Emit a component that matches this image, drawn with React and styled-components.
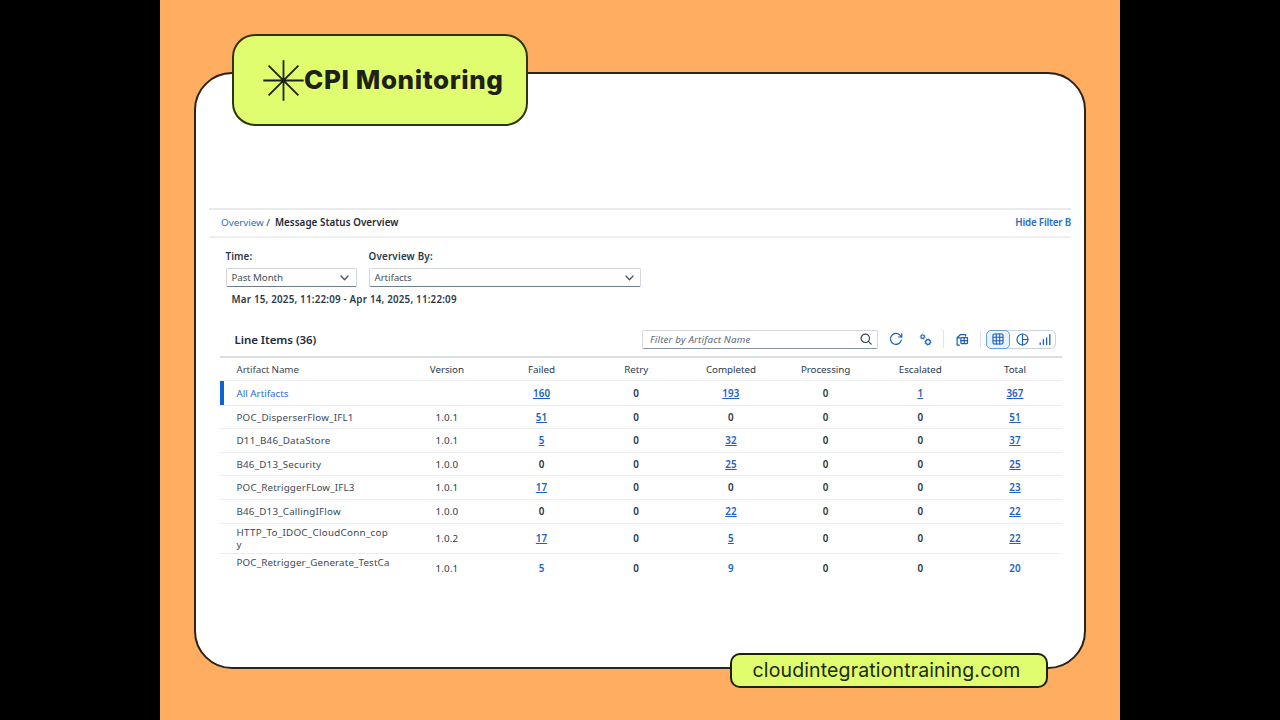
import styled, { createGlobalStyle } from 'styled-components';

const GlobalStyle = createGlobalStyle`
    * {
        box-sizing: border-box;
    }
    body {
        margin: 0;
        background: #000;
        overflow: hidden;
    }
`;

const Stage = styled.div`
    width: 1280px;
    height: 720px;
    display: flex;
    justify-content: center;
    background: #000;
`;

const Slide = styled.div`
    position: relative;
    width: 960px;
    height: 720px;
    padding: 72px 34px 51px;
    background: #ffad61;
`;

const Card = styled.div`
    height: 597px;
    padding: 134px 13px 0;
    border: 2px solid #2b241c;
    border-radius: 38px;
    background: #fff;
    font-family: 'Noto Sans', sans-serif;
    font-size: 9.8px;
    color: #2b3a4b;
`;

const Badge = styled.div`
    position: absolute;
    top: 34px;
    left: 72px;
    width: 295.5px;
    height: 92px;
    padding: 0 0 1px 29px;
    display: flex;
    align-items: center;
    border: 2px solid #2f3416;
    border-radius: 23px;
    background: #dffd6e;
    color: #1d2117;
    font: 800 26px Inter, sans-serif;
    letter-spacing: 0.6px;
    white-space: nowrap;
    & svg {
        margin-top: 1px;
    }
`;

const SiteTag = styled.div`
    position: absolute;
    top: 653px;
    left: 569.5px;
    width: 318px;
    height: 35px;
    padding: 0 0 1px 21px;
    display: flex;
    align-items: center;
    border: 2px solid #1d2109;
    border-radius: 10px;
    background: #dffd6e;
    color: #1d2a0d;
    font: 19.5px Inter, sans-serif;
    letter-spacing: 0.14px;
    white-space: nowrap;
`;

const Text = styled.span`
    font-size: ${(p) => p.$size || 9.8}px;
    font-weight: ${(p) => (p.$bold ? 600 : 400)};
    letter-spacing: ${(p) => p.$track || 0}px;
    color: ${(p) => p.$color || 'inherit'};
    white-space: nowrap;
`;

const Crumbs = styled.div`
    height: 30px;
    padding: 0 0 1px 12px;
    display: flex;
    align-items: center;
    border-top: 2px solid #e9eaeb;
    border-bottom: 2px solid #eeeff0;
    & .slash {
        margin: 0 5px 0 2.5px;
    }
    & .action {
        margin-left: auto;
    }
`;

const Filters = styled.div`
    display: flex;
    gap: 12px;
    padding: 12px 0 0 16.5px;
`;

const Field = styled.label`
    width: ${(p) => p.$width}px;
    display: flex;
    flex-direction: column;
    line-height: 14px;
`;

const Select = styled.div`
    height: 19px;
    margin-top: 4px;
    padding: 0 6.5px 0 5px;
    display: flex;
    align-items: center;
    justify-content: space-between;
    border: 1px solid #d4d8dc;
    border-bottom: 1px solid #6d7d8e;
    border-radius: 2px;
    color: #45505c;
`;

const Period = styled.div`
    height: 14px;
    margin-top: 6px;
    padding-left: 22.5px;
    line-height: 14px;
`;

const Toolbar = styled.div`
    height: 22px;
    margin-top: 21px;
    padding: 0 15px 0 25.5px;
    display: flex;
    align-items: center;
`;

const Search = styled.div`
    width: 236px;
    height: 19px;
    margin-left: auto;
    padding: 0 5px 0 7px;
    display: flex;
    align-items: center;
    justify-content: space-between;
    border: 1px solid #d4d8dc;
    border-bottom: 1px solid #8494a5;
    border-radius: 2px;
    font-style: italic;
    color: #5b6876;
`;

const Actions = styled.div`
    display: flex;
    align-items: center;
    margin-left: 11px;
    color: #1a5fb8;
    & > svg + svg {
        margin-left: 16px;
    }
`;

const Divider = styled.i`
    width: 1px;
    height: 18px;
    margin: ${(p) => p.$margin};
    background: #e2e5e8;
`;

const Segments = styled.div`
    width: 70px;
    height: 19px;
    display: flex;
    align-items: center;
    border: 1px solid #ccd3da;
    border-radius: 5px;
`;

const Segment = styled.div`
    width: ${(p) => p.$width}px;
    height: 19px;
    flex: none;
    display: flex;
    align-items: center;
    justify-content: center;
    ${(p) =>
        p.$active &&
        `
        margin-left: -1px;
        border: 1px solid #6a9fd8;
        border-radius: 5px;
        background: #e9f3fd;
    `}
`;

const Table = styled.div`
    width: 842px;
    margin: 6px 0 0 11px;
    border-top: 2px solid #dcdee0;
`;

const Row = styled.div`
    height: ${(p) => p.$height}px;
    padding-top: 2px;
    display: grid;
    grid-template-columns: 179.5px repeat(7, 94.7px);
    align-items: center;
    border-bottom: 1px solid ${(p) => (p.$last ? 'transparent' : '#eaecee')};
    box-shadow: ${(p) => (p.$selected ? 'inset 4px 0 #0f62d6' : 'none')};
`;

const Name = styled.div`
    padding-left: 16.5px;
    line-height: 12.5px;
    display: flex;
    flex-direction: column;
    color: ${(p) => p.$color || '#3d4956'};
`;

const Cell = styled.div`
    display: flex;
    justify-content: center;
    line-height: 12.5px;
`;

const Count = styled.span`
    font-weight: 600;
    letter-spacing: 0.1px;
    color: ${(p) => (p.$link ? '#1b62c4' : '#27333f')};
    text-decoration: ${(p) => (p.$underline ? 'underline' : 'none')};
    text-underline-offset: 1px;
`;

const Svg = ({ w, h = w, children, ...rest }) => (
    <svg
        width={w}
        height={h}
        viewBox={`0 0 ${w} ${h}`}
        fill='none'
        stroke='currentColor'
        strokeWidth='1.2'
        strokeLinecap='round'
        strokeLinejoin='round'
        {...rest}
    >
        {children}
    </svg>
);

const Star = () => (
    <Svg w={41} strokeWidth='1.8' strokeLinecap='butt'>
        <path d='M20.5 0.3v40.4M0.3 20.5h40.4M5.6 5.6l29.8 29.8M35.4 5.6L5.6 35.4' />
    </Svg>
);

const Chevron = () => (
    <Svg w={9} h={6} strokeWidth='1.3' stroke='#4a5561'>
        <path d='M1 1l3.5 3.7L8 1' />
    </Svg>
);

const SearchIcon = () => (
    <Svg w={12} stroke='#36424e'>
        <circle cx='5.3' cy='5.3' r='4.2' />
        <path d='M8.4 8.4l2.8 2.8' />
    </Svg>
);

const RefreshIcon = () => (
    <Svg w={14}>
        <path d='M12.3 8.2A5.5 5.5 0 1 1 11.4 3.6L12.6 5M12.8 1.6V5H9.4' />
    </Svg>
);

const GearsIcon = () => (
    <Svg w={13}>
        <circle cx='3.7' cy='3.7' r='1.7' />
        <circle cx='3.7' cy='3.7' r='2.6' strokeWidth='0.8' strokeDasharray='0.9 1.82' strokeLinecap='butt' />
        <circle cx='9' cy='9' r='2.3' />
        <circle cx='9' cy='9' r='3.2' strokeWidth='0.8' strokeDasharray='1 1.51' strokeLinecap='butt' />
    </Svg>
);

const ExportIcon = () => (
    <Svg w={13}>
        <path d='M3.4 12.1H1.1V4.8L4.3 1.7H9.6V3M1.3 4.9H4' />
        <rect x='4.9' y='4.6' width='6.6' height='6' rx='0.5' />
        <path d='M4.9 7.6h6.6M8.2 4.7v5.8' />
    </Svg>
);

const GridIcon = () => (
    <Svg w={12} strokeWidth='1.1'>
        <rect x='1' y='1' width='10' height='10' rx='1.2' />
        <path d='M1 4.3h10M1 7.7h10M4.3 1v10M7.7 1v10' />
    </Svg>
);

const PieIcon = () => (
    <Svg w={13}>
        <circle cx='6.5' cy='6.5' r='5.5' />
        <path d='M6.5 1v11M6.5 6.5H12' />
    </Svg>
);

const BarsIcon = () => (
    <Svg w={12} h={13} strokeWidth='1.3'>
        <path d='M1.2 10v1.6M4.4 6.6v5M7.6 5v6.6M10.8 1.6v10' />
    </Svg>
);

const columns = ['Version', 'Failed', 'Retry', 'Completed', 'Processing', 'Escalated', 'Total'];

const rows = [
    { name: ['All Artifacts'], track: 0, version: '', counts: [160, 0, 193, 0, 1, 367], height: 24.2 },
    { name: ['POC_DisperserFlow_IFL1'], track: 0.19, version: '1.0.1', counts: [51, 0, 0, 0, 0, 51], height: 23.6 },
    { name: ['D11_B46_DataStore'], track: 0.2, version: '1.0.1', counts: [5, 0, 32, 0, 0, 37], height: 23.6 },
    { name: ['B46_D13_Security'], track: 0.2, version: '1.0.0', counts: [0, 0, 25, 0, 0, 25], height: 23.6 },
    { name: ['POC_RetriggerFLow_IFL3'], track: 0.15, version: '1.0.1', counts: [17, 0, 0, 0, 0, 23], height: 23.6 },
    { name: ['B46_D13_CallingIFlow'], track: 0.2, version: '1.0.0', counts: [0, 0, 22, 0, 0, 22], height: 23.6 },
    { name: ['HTTP_To_IDOC_CloudConn_cop', 'y'], track: 0.28, version: '1.0.2', counts: [17, 0, 5, 0, 0, 22], height: 30 },
    { name: ['POC_Retrigger_Generate_TestCa', '\u00a0'], track: 0.14, version: '1.0.1', counts: [5, 0, 9, 0, 0, 20], height: 30 },
];

function App() {
    return (
        <Stage>
            <GlobalStyle />
            <Slide>
                <Card>
                    <Crumbs>
                        <Text $color='#1f6fc9'>Overview</Text>
                        <Text className='slash'>/</Text>
                        <Text $bold $track={0.06} $color='#1d2a38'>Message Status Overview</Text>
                        <Text className='action' $bold $track={-0.2} $color='#2a6cc0'>Hide Filter B</Text>
                    </Crumbs>
                    <Filters>
                        <Field $width={131}>
                            <Text $bold $track={0.1}>Time:</Text>
                            <Select>
                                <Text $track={-0.12}>Past Month</Text>
                                <Chevron />
                            </Select>
                        </Field>
                        <Field $width={272.5}>
                            <Text $bold $track={0.2}>Overview By:</Text>
                            <Select>
                                <Text $track={-0.12}>Artifacts</Text>
                                <Chevron />
                            </Select>
                        </Field>
                    </Filters>
                    <Period>
                        <Text $bold $track={0.2}>Mar 15, 2025, 11:22:09 - Apr 14, 2025, 11:22:09</Text>
                    </Period>
                    <Toolbar>
                        <Text $bold $size={11.5} $track={-0.05} $color='#1d2a38'>Line Items (36)</Text>
                        <Search>
                            <Text $track={0.15}>Filter by Artifact Name</Text>
                            <SearchIcon />
                        </Search>
                        <Actions>
                            <RefreshIcon />
                            <GearsIcon />
                            <Divider $margin='0 11.5px 0 11px' />
                            <ExportIcon />
                            <Divider $margin='0 5px 0 11.5px' />
                            <Segments>
                                <Segment $active $width={24}><GridIcon /></Segment>
                                <Segment $width={24}><PieIcon /></Segment>
                                <Segment $width={22}><BarsIcon /></Segment>
                            </Segments>
                        </Actions>
                    </Toolbar>
                    <Table>
                        <Row $height={23.4}>
                            <Name><Text $track={-0.1}>Artifact Name</Text></Name>
                            {columns.map((c) => (
                                <Cell key={c}><Text $track={-0.05}>{c}</Text></Cell>
                            ))}
                        </Row>
                        {rows.map((r, i) => (
                            <Row key={r.name[0]} $height={r.height} $selected={i === 0} $last={i === rows.length - 1}>
                                <Name $color={i === 0 && '#1f6fc9'}>
                                    {r.name.map((line) => (
                                        <Text key={line} $track={r.track}>{line}</Text>
                                    ))}
                                </Name>
                                <Cell><Text $track={0.1}>{r.version}</Text></Cell>
                                {r.counts.map((n, j) => (
                                    <Cell key={j}>
                                        <Count $link={n > 0} $underline={n > 0 && i < rows.length - 1}>
                                            {n}
                                        </Count>
                                    </Cell>
                                ))}
                            </Row>
                        ))}
                    </Table>
                </Card>
                <Badge>
                    <Star />
                    CPI Monitoring
                </Badge>
                <SiteTag>cloudintegrationtraining.com</SiteTag>
            </Slide>
        </Stage>
    );
}

export default App;
